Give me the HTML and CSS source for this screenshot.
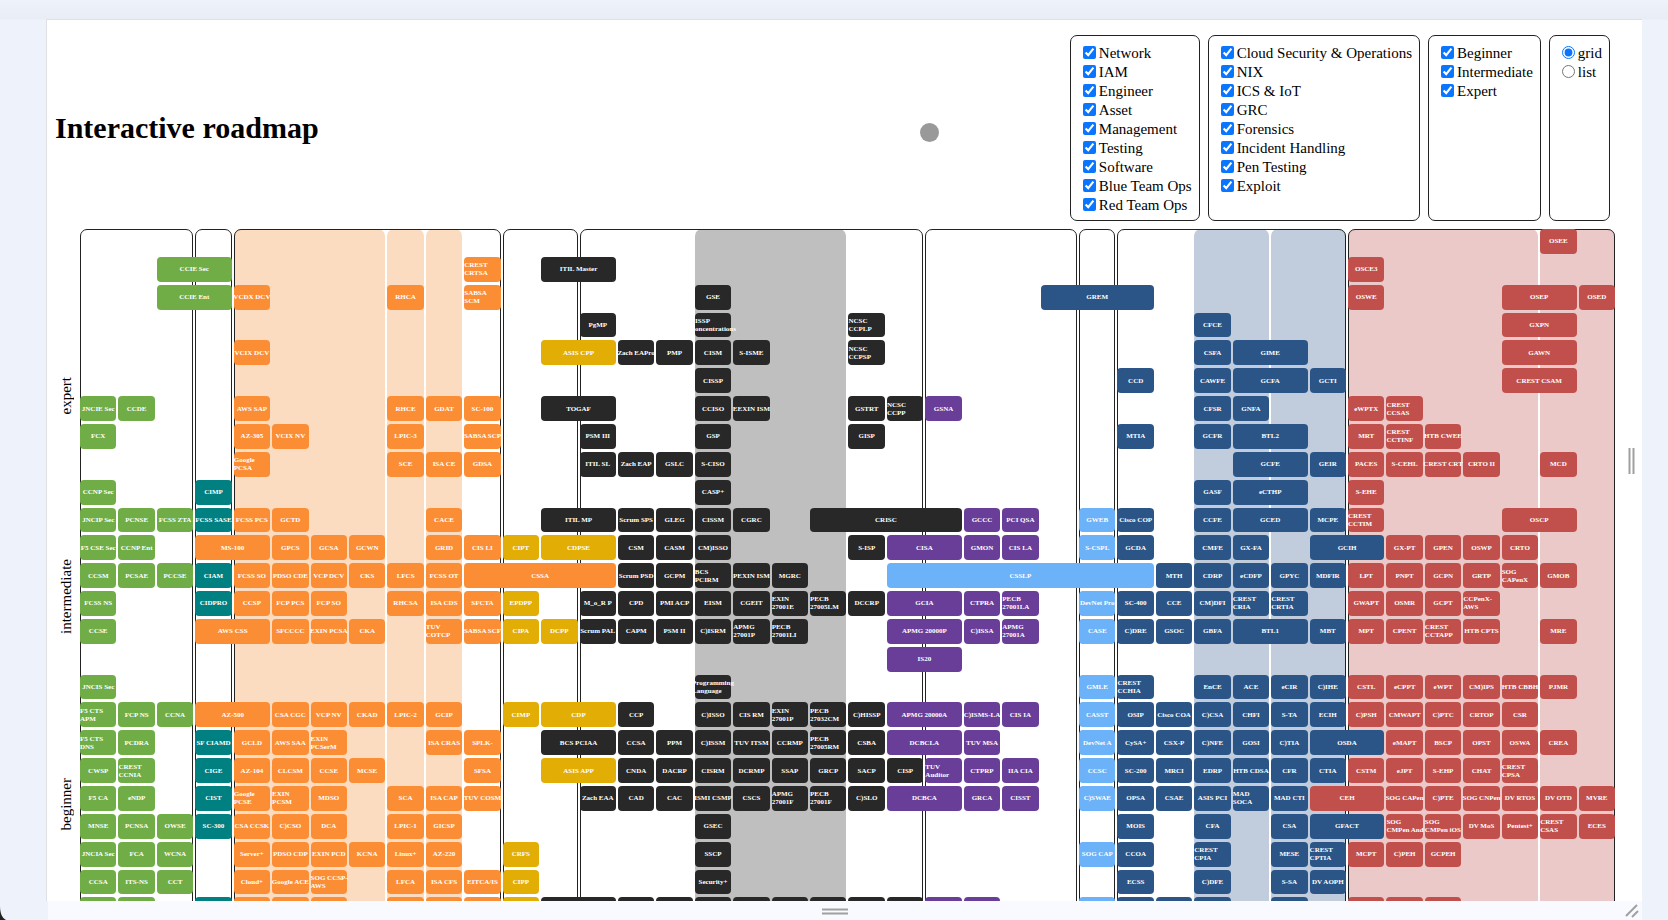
FILE: index.html
```html
<!DOCTYPE html>
<html lang="en">
<head>
<meta charset="utf-8">
<title>Interactive roadmap</title>
<link rel="stylesheet" href="styles.css">
</head>
<body>
<div class="window">
  <main class="panel">
    <header class="header">
      <h1 class="title">Interactive roadmap</h1>
      <form class="filters">
        <div class="filter-box">
          <label><input type="checkbox" checked>Network</label>
          <label><input type="checkbox" checked>IAM</label>
          <label><input type="checkbox" checked>Engineer</label>
          <label><input type="checkbox" checked>Asset</label>
          <label><input type="checkbox" checked>Management</label>
          <label><input type="checkbox" checked>Testing</label>
          <label><input type="checkbox" checked>Software</label>
          <label><input type="checkbox" checked>Blue Team Ops</label>
          <label><input type="checkbox" checked>Red Team Ops</label>
        </div>
        <div class="filter-box">
          <label><input type="checkbox" checked>Cloud Security &amp; Operations</label>
          <label><input type="checkbox" checked>NIX</label>
          <label><input type="checkbox" checked>ICS &amp; IoT</label>
          <label><input type="checkbox" checked>GRC</label>
          <label><input type="checkbox" checked>Forensics</label>
          <label><input type="checkbox" checked>Incident Handling</label>
          <label><input type="checkbox" checked>Pen Testing</label>
          <label><input type="checkbox" checked>Exploit</label>
        </div>
        <div class="filter-box">
          <label><input type="checkbox" checked>Beginner</label>
          <label><input type="checkbox" checked>Intermediate</label>
          <label><input type="checkbox" checked>Expert</label>
        </div>
        <div class="filter-box">
          <label><input type="radio" name="view" checked>grid</label>
          <label><input type="radio" name="view">list</label>
        </div>
      </form>
    </header>
    <section class="roadmap">
      <div class="levels">
        <span class="level">expert</span>
        <span class="level">intermediate</span>
        <span class="level">beginner</span>
      </div>
      <div class="grid" id="grid"></div>
    </section>
  </main>
  <div class="bottom-bar"></div>
  <span class="pointer"></span>
  <svg class="grip grip-right" width="8" height="26" viewBox="0 0 8 26"><path d="M1.5 0v26M5.5 0v26"/></svg>
  <svg class="grip grip-bottom" width="26" height="8" viewBox="0 0 26 8"><path d="M0 1.5h26M0 5.5h26"/></svg>
  <svg class="grip grip-corner" width="14" height="14" viewBox="0 0 14 14"><path d="M1 12L12 1M7 13l6-6"/></svg>
  <svg class="window-corner" width="6" height="14" viewBox="0 0 6 14"><path d="M0 0C0 7 2 12 6 14H0z"/></svg>
</div>
<script src="roadmap.js"></script>
</body>
</html>
```

FILE: styles.css
```css
* { box-sizing: border-box; }

body {
  margin: 0;
  background: #edf2fb;
  color: #000;
  font-family: "Liberation Serif", "Times New Roman", serif;
  font-size: 15px;
}

.window {
  position: relative;
  display: flex;
  flex-direction: column;
  height: 100vh;
  min-height: 600px;
  padding: 19px 26px 0 46px;
  overflow: hidden;
  background: linear-gradient(#edf2fb, #e9edf5 19px, #edf2fb 20px);
}

.panel {
  display: flex;
  flex: 1;
  flex-direction: column;
  min-height: 0;
  padding: 15px 27px 0 8px;
  overflow: hidden;
  border-top: 1px solid #e0dfe6;
  border-left: 1px solid #e0dfe6;
  background: #fff;
}

.bottom-bar {
  flex: none;
  height: 19px;
  margin-left: 2px;
  background: #f8faff;
}

.header {
  display: flex;
  align-items: center;
  justify-content: space-between;
  margin-bottom: 8px;
  padding-right: 5px;
}

.title {
  margin: 0;
  font-size: 30px;
  line-height: 34px;
}

.filters {
  display: flex;
  gap: 8px;
}

.filter-box {
  display: flex;
  flex-direction: column;
  padding: 8px 7px 5px 8px;
  border: 1px solid #222;
  border-radius: 7px;
}

.filter-box label {
  display: flex;
  align-items: center;
  height: 19px;
  line-height: 19px;
  white-space: nowrap;
}

.filter-box input {
  width: 13px;
  height: 13px;
  margin: 0 3px 2px 4px;
  accent-color: #0a76ff;
}

.roadmap {
  display: flex;
  flex: 1;
  min-height: 0;
  margin-bottom: -77px;
}

.levels {
  display: grid;
  flex: none;
  grid-template-rows: minmax(0, 24fr) minmax(0, 5fr) minmax(0, 25fr);
  justify-items: center;
  align-items: center;
  width: 25px;
  padding-right: 3px;
}

.level {
  writing-mode: vertical-rl;
  transform: rotate(180deg);
  line-height: 18px;
}

.grid {
  display: grid;
  flex: 1;
  grid-template-columns: repeat(40, minmax(0, 1fr));
  grid-template-rows: repeat(27, minmax(0, 1fr));
  gap: 3px 2px;
}

.band, .frame {
  grid-row: 1 / -1;
  border-radius: 7px;
}

.frame { border: 1px solid #222; }

.band-cloud { background: #fcdcc0; }
.band-grc { background: #bfbfbf; }
.band-blue { background: #c1ccdd; }
.band-red { background: #ecc9c9; }

.tile {
  display: flex;
  align-items: center;
  justify-content: center;
  border-radius: 4px;
  color: #fff;
  font-size: 7px;
  font-weight: bold;
  line-height: 8px;
  text-decoration: none;
  white-space: pre;
}

.tile-wrapped { justify-content: flex-start; }

.network { background: #70ad47; }
.iam { background: #008080; }
.engineer { background: #fb8e35; }
.asset { background: #e2ad04; }
.management { background: #282828; }
.testing { background: #693e98; }
.software { background: #6cb2f8; }
.blue-team { background: #2b5587; }
.red-team { background: #c1504c; }

.pointer {
  position: absolute;
  top: 123px;
  left: 920px;
  width: 19px;
  height: 19px;
  border-radius: 50%;
  background: #999;
}

.grip {
  position: absolute;
  fill: none;
  stroke: #a0a0a0;
  stroke-width: 2;
}

.grip-right { top: 448px; right: 32px; }
.grip-bottom { bottom: 4px; left: 822px; }
.grip-corner { right: 29px; bottom: 2px; }

.window-corner {
  position: absolute;
  bottom: 0;
  left: 0;
  fill: #222;
}
```

FILE: roadmap.js
```js
// Domains: class name, first column, last column.
const domains = [
  ["network", 1, 3], ["iam", 4, 4], ["engineer", 5, 11], ["asset", 12, 13],
  ["management", 14, 22], ["testing", 23, 26], ["software", 27, 27],
  ["blue-team", 28, 33], ["red-team", 34, 40]
];

const bands = [
  ["band-cloud", 5, 8], ["band-cloud", 9, 9], ["band-cloud", 10, 10],
  ["band-grc", 17, 20], ["band-blue", 30, 31], ["band-blue", 32, 33],
  ["band-red", 34, 38], ["band-red", 39, 40]
];

// One string per row. Entry: column[+span][@domain index] name. "/" breaks a line, "^" breaks a centred one.
const rows = [
  "39 OSEE",
  "3+2 CCIE Sec|11 CREST/CRTSA|13+2@4 ITIL Master|34 OSCE3",
  "3+2 CCIE Ent|5 VCDX DCV|9 RHCA|11 SABSA/SCM|17 GSE|26+3@7 GREM|34 OSWE|38+2 OSEP|40 OSED",
  "14 PgMP|17 CISSP^Concentrations|21 NCSC/CCPLP|30 CFCE|38+2 GXPN",
  "5 VCIX DCV|13+2 ASIS CPP|15 Zach EAPro|16 PMP|17 CISM|18 S-ISME|21 NCSC/CCPSP|30 CSFA|31+2 GIME|38+2 GAWN",
  "17 CISSP|28 CCD|30 CAWFE|31+2 GCFA|33 GCTI|38+2 CREST CSAM",
  "1 JNCIE Sec|2 CCDE|5 AWS SAP|9 RHCE|10 GDAT|11 SC-100|13+2@4 TOGAF|17 CCISO|18 EEXIN ISM|21 GSTRT|22 NCSC/CCPP|23 GSNA|30 CFSR|31 GNFA|34 eWPTX|35 CREST/CCSAS",
  "1 FCX|5 AZ-305|6 VCIX NV|9 LPIC-3|11 SABSA SCP|14 PSM III|17 GSP|21 GISP|28 MTIA|30 GCFR|31+2 BTL2|34 MRT|35 CREST/CCTINF|36 HTB CWEE",
  "5 Google/PCSA|9 SCE|10 ISA CE|11 GDSA|14 ITIL SL|15 Zach EAP|16 GSLC|17 S-CISO|31+2 GCFE|33 GEIR|34 PACES|35 S-CEHL|36 CREST CRT|37 CRTO II|39 MCD",
  "1 CCNP Sec|4 CIMP|17 CASP+|30 GASF|31+2 eCTHP|34 S-EHE",
  "1 JNCIP Sec|2 PCNSE|3 FCSS ZTA|4 FCSS SASE|5 FCSS PCS|6 GCTD|10 CACE|13+2@4 ITIL MP|15 Scrum SPS|16 GLEG|17 CISSM|18 CGRC|20+4 CRISC|24 GCCC|25 PCI QSA|27 GWEB|28 Cisco COP|30 CCFE|31+2 GCED|33 MCPE|34 CREST/CCTIM|38+2 OSCP",
  "1 F5 CSE Sec|2 CCNP Ent|4+2@2 MS-100|6 GPCS|7 GCSA|8 GCWN|10 GRID|11 CIS LI|12 CIPT|13+2 CDPSE|15 CSM|16 CASM|17 CM)ISSO|21 S-ISP|22+2@5 CISA|24 GMON|25 CIS LA|27 S-CSPL|28 GCDA|30 CMFE|31 GX-FA|33+2 GCIH|35 GX-PT|36 GPEN|37 OSWP|38 CRTO",
  "1 CCSM|2 PCSAE|3 PCCSE|4 CIAM|5 FCSS SO|6 PDSO CDE|7 VCP DCV|8 CKS|9 LFCS|10 FCSS OT|11+4 CSSA|15 Scrum PSD|16 GCPM|17 BCS/PCIRM|18 PEXIN ISM|19 MGRC|22+7@6 CSSLP|29 MTH|30 CDRP|31 eCDFP|32 GPYC|33 MDFIR|34 LPT|35 PNPT|36 GCPN|37 GRTP|38 SOG/CAPenX|39 GMOB",
  "1 FCSS NS|4 CIDPRO|5 CCSP|6 FCP PCS|7 FCP SO|9 RHCSA|10 ISA CDS|11 SFCTA|12 EPDPP|14 M_o_R P|15 CPD|16 PMI ACP|17 EISM|18 CGEIT|19 EXIN/27001E|20 PECB/27005LM|21 DCCRP|22+2@5 GCIA|24 CTPRA|25 PECB/27001LA|27 DevNet Pro|28 SC-400|29 CCE|30 CM)DFI|31 CREST/CRIA|32 CREST/CRTIA|34 GWAPT|35 OSMR|36 GCPT|37 CCPenX-/AWS",
  "1 CCSE|4+2@2 AWS CSS|6 SFCCCC|7 EXIN PCSA|8 CKA|10 TUV/COTCP|11 SABSA SCF|12 CIPA|13 DCPP|14 Scrum PAL|15 CAPM|16 PSM II|17 C)ISRM|18 APMG/27001P|19 PECB/27001LI|22+2@5 APMG 20000P|24 C)ISSA|25 APMG/27001A|27 CASE|28 C)DRE|29 GSOC|30 GBFA|31+2 BTL1|33 MBT|34 MPT|35 CPENT|36 CREST/CCTAPP|37 HTB CPTS|39 MRE",
  "22+2@5 IS20",
  "1 JNCIS Sec|17 Programming^Language|27 GMLE|28 CREST/CCHIA|30 EnCE|31 ACE|32 eCIR|33 C)IHE|34 CSTL|35 eCPPT|36 eWPT|37 CM)IPS|38 HTB CBBH|39 PJMR",
  "1 F5 CTS/APM|2 FCP NS|3 CCNA|4+2@2 AZ-500|6 CSA CGC|7 VCP NV|8 CKAD|9 LPIC-2|10 GCIP|12 CIMP|13+2 CDP|15 CCP|17 C)ISSO|18 CIS RM|19 EXIN/27001P|20 PECB/27032CM|21 C)HISSP|22+2@5 APMG 20000A|24 C)ISMS-LA|25 CIS IA|27 CASST|28 OSIP|29 Cisco COA|30 C)CSA|31 CHFI|32 S-TA|33 ECIH|34 C)PSH|35 CMWAPT|36 C)PTC|37 CRTOP|38 CSR",
  "1 F5 CTS/DNS|2 PCDRA|4 SF CIAMD|5 GCLD|6 AWS SAA|7 EXIN/PCSerM|10 ISA CRAS|11 SPLK-|13+2@4 BCS PCIAA|15 CCSA|16 PPM|17 C)ISSM|18 TUV ITSM|19 CCRMP|20 PECB/27005RM|21 CSBA|22+2@5 DCBCLA|24 TUV MSA|27 DevNet A|28 CySA+|29 CSX-P|30 C)NFE|31 GOSI|32 C)TIA|33+2 OSDA|35 eMAPT|36 BSCP|37 OPST|38 OSWA|39 CREA",
  "1 CWSP|2 CREST/CCNIA|4 CIGE|5 AZ-104|6 CLCSM|7 CCSE|8 MCSE|11 SFSA|13+2 ASIS APP|15 CNDA|16 DACRP|17 CISRM|18 DCRMP|19 SSAP|20 GRCP|21 SACP|22 CISP|23 TUV/Auditor|24 CTPRP|25 IIA CIA|27 CCSC|28 SC-200|29 MRCI|30 EDRP|31 HTB CDSA|32 CFR|33 CTIA|34 CSTM|35 eJPT|36 S-EHP|37 CHAT|38 CREST/CPSA",
  "1 F5 CA|2 eNDP|4 CIST|5 Google/PCSE|6 EXIN/PCSM|7 MDSO|9 SCA|10 ISA CAP|11 TUV COSM|14 Zach EAA|15 CAD|16 CAC|17 ISMI CSMP|18 CSCS|19 APMG/27001F|20 PECB/27001F|21 C)SLO|22+2@5 DCBCA|24 GRCA|25 CISST|27 C)SWAE|28 OPSA|29 CSAE|30 ASIS PCI|31 MAD/SOCA|32 MAD CTI|33+2@8 CEH|35 SOG CAPen|36 C)PTE|37 SOG CNPen|38 DV RTOS|39 DV OTD|40 MVRE",
  "1 MNSE|2 PCNSA|3 OWSE|4 SC-300|5 CSA CCSK|6 C)CSO|7 DCA|9 LPIC-1|10 GICSP|17 GSEC|28 MOIS|30 CFA|32 CSA|33+2 GFACT|35 SOG/CMPen And|36 SOG/CMPen iOS|37 DV MoS|38 Pentest+|39 CREST/CSAS|40 ECES",
  "1 JNCIA Sec|2 FCA|3 WCNA|5 Server+|6 PDSO CDP|7 EXIN PCD|8 KCNA|9 Linux+|10 AZ-220|12 CRFS|17 SSCP|27 SOG CAP|28 CCOA|30 CREST/CPIA|32 MESE|33 CREST/CPTIA|34 MCPT|35 C)PEH|36 GCPEH",
  "1 CCSA|2 ITS-NS|3 CCT|5 Cloud+|6 Google ACE|7 SOG CCSP-/AWS|9 LFCA|10 ISA CFS|11 EITCA/IS|12 CIPP|17 Security+|28 ECSS|30 C)DFE|32 S-SA|33 DV AOPH",
  "1|2|4|5|6|7|9|10|11|12|13+2@4|15|16|17|18|19|20|21|22|23|24|27|28|29|30|32|34|35|36"
];

const grid = document.getElementById("grid");

function place(tag, className, row, column, span) {
  const element = document.createElement(tag);
  element.className = className;
  element.style.gridColumn = column + " / span " + span;
  if (row) element.style.gridRow = row;
  grid.append(element);
  return element;
}

bands.forEach(([name, first, last]) => place("div", "band " + name, 0, first, last - first + 1));
domains.forEach(([, first, last]) => place("div", "frame", 0, first, last - first + 1));

rows.forEach((row, index) => {
  row.split("|").forEach(entry => {
    const [, column, span, domain, name] = entry.match(/^(\d+)(?:\+(\d+))?(?:@(\d))? ?(.*)$/);
    const group = domain ? domains[domain] : domains.find(item => column <= item[2]);
    const wrapped = name.includes("/") && name !== "EITCA/IS";
    const tile = place("a", "tile " + group[0] + (wrapped ? " tile-wrapped" : ""), index + 1, column, span || 1);
    tile.href = "#";
    tile.textContent = wrapped ? name.replace("/", "\n") : name.replace("^", "\n");
  });
});
```
